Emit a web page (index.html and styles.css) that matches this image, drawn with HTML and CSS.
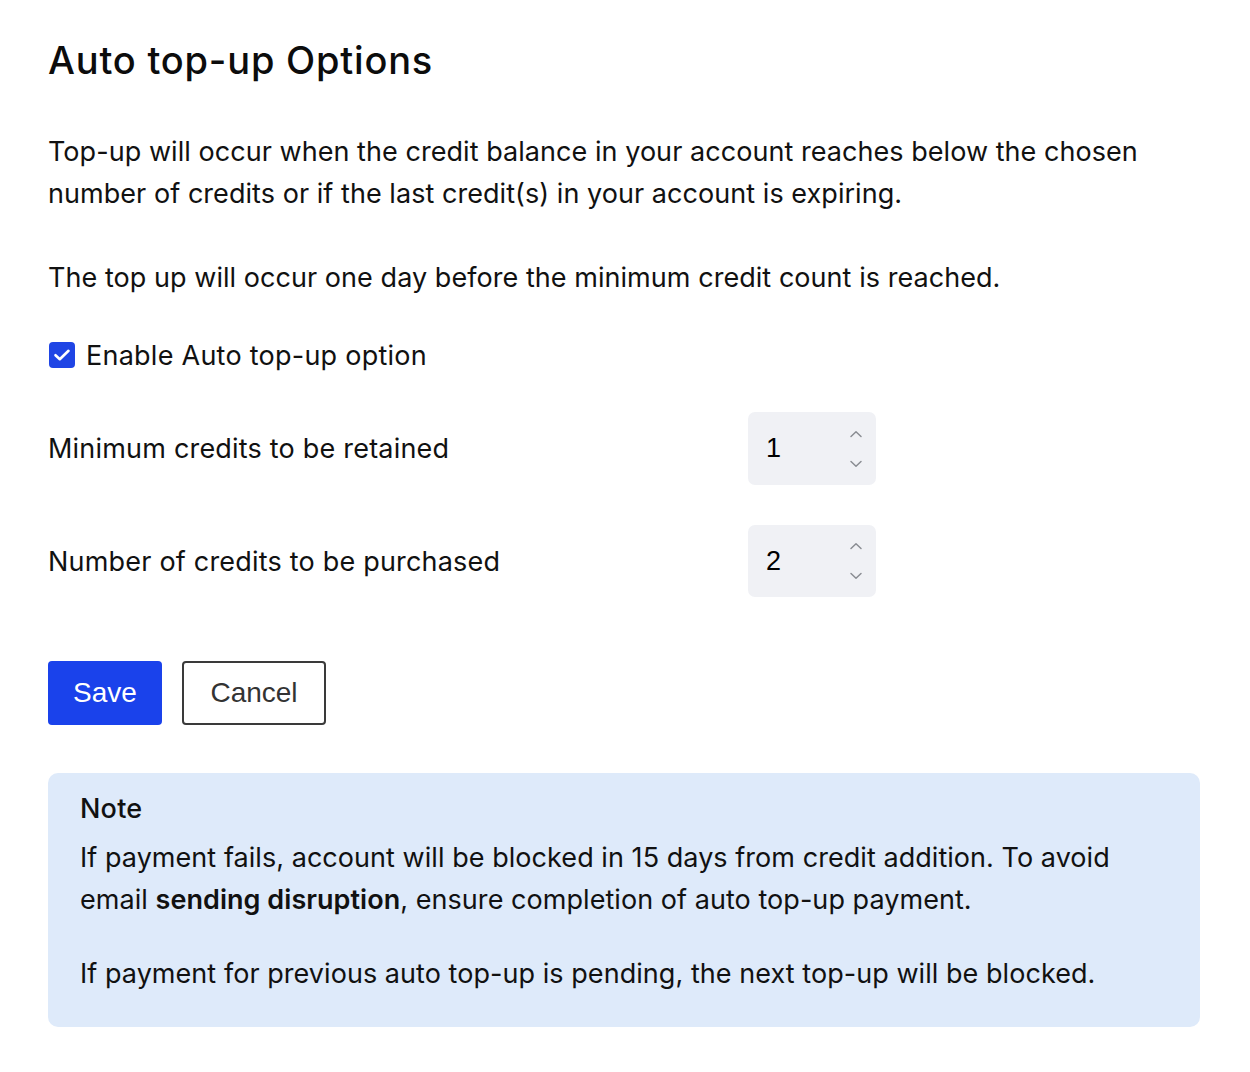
FILE: index.html
```html
<!DOCTYPE html>
<html lang="en">
<head>
<meta charset="utf-8">
<title>Auto top-up Options</title>
<link rel="stylesheet" href="styles.css">
</head>
<body>
<main class="page">
  <h1 class="title">Auto top-up Options</h1>
  <p class="text p1">Top-up will occur when the credit balance in your account reaches below the chosen number of credits or if the last credit(s) in your account is expiring.</p>
  <p class="text p2">The top up will occur one day before the minimum credit count is reached.</p>
  <label class="check-row">
    <span class="checkbox">
      <svg width="18" height="14" viewBox="0 0 18 14"><path d="M2.5 7.2 L6.8 11.2 L15.5 2.8" fill="none" stroke="#fff" stroke-width="2.6" stroke-linecap="round" stroke-linejoin="round"/></svg>
    </span>
    <span class="check-label">Enable Auto top-up option</span>
  </label>
  <div class="field-row first">
    <span class="field-label">Minimum credits to be retained</span>
    <div class="num-box">
      <span class="num-val">1</span>
      <span class="spin">
        <svg width="14" height="8" viewBox="0 0 14 8"><path d="M2 6.5 L7 1.8 L12 6.5" fill="none" stroke="#8a8d93" stroke-width="1.5" stroke-linecap="round" stroke-linejoin="round"/></svg>
        <svg width="14" height="8" viewBox="0 0 14 8"><path d="M2 1.5 L7 6.2 L12 1.5" fill="none" stroke="#8a8d93" stroke-width="1.5" stroke-linecap="round" stroke-linejoin="round"/></svg>
      </span>
    </div>
  </div>
  <div class="field-row second">
    <span class="field-label">Number of credits to be purchased</span>
    <div class="num-box">
      <span class="num-val">2</span>
      <span class="spin">
        <svg width="14" height="8" viewBox="0 0 14 8"><path d="M2 6.5 L7 1.8 L12 6.5" fill="none" stroke="#8a8d93" stroke-width="1.5" stroke-linecap="round" stroke-linejoin="round"/></svg>
        <svg width="14" height="8" viewBox="0 0 14 8"><path d="M2 1.5 L7 6.2 L12 1.5" fill="none" stroke="#8a8d93" stroke-width="1.5" stroke-linecap="round" stroke-linejoin="round"/></svg>
      </span>
    </div>
  </div>
  <div class="actions">
    <button class="btn btn-primary">Save</button>
    <button class="btn btn-secondary">Cancel</button>
  </div>
  <section class="note">
    <h2 class="note-title">Note</h2>
    <p class="note-text">If payment fails, account will be blocked in 15 days from credit addition. To avoid email <strong>sending disruption</strong>, ensure completion of auto top-up payment.</p>
    <p class="note-text second">If payment for previous auto top-up is pending, the next top-up will be blocked.</p>
  </section>
</main>
</body>
</html>
```

FILE: styles.css
```css
* { box-sizing: border-box; }
html, body { margin: 0; padding: 0; background: #fff; }
body {
  font-family: Inter, "Noto Sans", "Liberation Sans", sans-serif;
  color: #111;
}
.page {
  width: 1152px;
  margin-left: 48px;
  padding-top: 38px;
  padding-bottom: 45px;
}
.title {
  margin: 0;
  font-size: 38px;
  line-height: 44px;
  font-weight: 500;
  letter-spacing: 0.8px;
  color: #0c0c0c;
}
.text {
  margin: 0;
  font-size: 27px;
  line-height: 42px;
  font-weight: 400;
  letter-spacing: 0.05px;
}
.p1 { margin-top: 49px; }
.p2 { margin-top: 42px; }
.check-row {
  display: flex;
  align-items: center;
  height: 42px;
  margin-top: 35px;
  gap: 11px;
}
.checkbox {
  width: 26px;
  height: 26px;
  margin-left: 1px;
  border-radius: 4px;
  background: #1f45e5;
  display: flex;
  align-items: center;
  justify-content: center;
}
.check-label {
  font-size: 27px;
  letter-spacing: 0.25px;
}
.field-row {
  display: flex;
  align-items: center;
  height: 73px;
}
.field-row.first { margin-top: 36px; }
.field-row.second { margin-top: 40px; height: 72px; }
.field-label {
  width: 700px;
  font-size: 27px;
  letter-spacing: 0.2px;
}
.num-box {
  width: 128px;
  height: 100%;
  border-radius: 7px;
  background: #f0f1f5;
  display: flex;
  align-items: center;
  justify-content: space-between;
  padding: 0 13px 0 18px;
}
.num-val {
  font-family: "Liberation Sans", Arial, sans-serif;
  font-size: 27px;
  color: #000;
}
.spin {
  display: flex;
  flex-direction: column;
  gap: 22px;
}
.spin svg { display: block; }
.actions {
  display: flex;
  gap: 20px;
  margin-top: 64px;
}
.btn {
  height: 64px;
  font-family: "Liberation Sans", Arial, sans-serif;
  font-size: 28px;
  border-radius: 4px;
  padding: 0;
  cursor: pointer;
}
.btn-primary {
  width: 114px;
  background: #1a42eb;
  color: #fff;
  border: none;
}
.btn-secondary {
  width: 144px;
  background: #fff;
  color: #333;
  border: 2px solid #3a3a3a;
}
.note {
  margin-top: 48px;
  background: #deeafa;
  border-radius: 10px;
  padding: 18px 32px 32px 32px;
}
.note-title {
  margin: 0;
  font-size: 27px;
  line-height: 36px;
  font-weight: 500;
  letter-spacing: 0.2px;
}
.note-text {
  margin: 10px 0 0 0;
  font-size: 27px;
  line-height: 42px;
  letter-spacing: 0.05px;
}
.note-text strong { font-weight: 600; }
.note-text.second { margin-top: 32px; }
```
